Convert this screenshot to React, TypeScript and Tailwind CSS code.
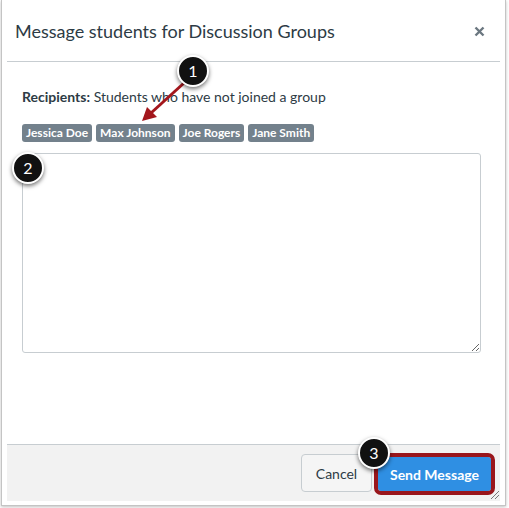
import React from "react";

const recipients = ["Jessica Doe", "Max Johnson", "Joe Rogers", "Jane Smith"];

function Marker({ n, className }: { n: number; className: string }) {
  return (
    <div
      className={`absolute w-[32px] h-[32px] rounded-full bg-[#111] border-2 border-white shadow-[0_2px_4px_rgba(0,0,0,0.55)] flex items-center justify-center text-white text-[16px] leading-none ${className}`}
    >
      {n}
    </div>
  );
}

export default function App() {
  return (
    <main className="min-h-screen bg-white font-['Lato','Liberation_Sans',sans-serif] relative">
      <div className="ml-[1px] w-[505px] h-[506px] border-x border-b border-[#c4c4c4] shadow-[0_1px_3px_rgba(0,0,0,0.25)] px-[5px] pb-[4px] flex flex-col bg-white">
        <header className="h-[62px] shrink-0 border-b border-[#c7cdd1] flex items-center justify-between pl-[8px] pr-[15px] pt-[1px]">
          <h1 className="text-[18px] text-[#2d3b45] font-normal">
            Message students for Discussion Groups
          </h1>
          <svg width="11" height="11" viewBox="0 0 11 11" className="text-[#6b7780]">
            <path d="M1.5 1.5 L9.5 9.5 M9.5 1.5 L1.5 9.5" stroke="currentColor" strokeWidth="2.4" />
          </svg>
        </header>

        <section className="flex-1 px-[15px] pt-[25px]">
          <p className="text-[14px] leading-[20px] text-[#2d3b45]">
            <span className="font-bold">Recipients:</span> Students who have not joined a group
          </p>
          <div className="flex gap-[4px] mt-[17px]">
            {recipients.map((r) => (
              <span
                key={r}
                className="h-[18px] px-[4px] rounded-[3px] bg-[#73818c] text-white text-[12px] font-bold leading-[18px]"
              >
                {r}
              </span>
            ))}
          </div>
          <textarea className="mt-[11px] w-[459px] h-[200px] block border border-[#c7cdd1] rounded-[3px] bg-white outline-none" />
        </section>

        <footer className="h-[57px] shrink-0 border-t border-[#c7cdd1] bg-[#f2f2f2] flex items-start justify-end gap-[6px] pt-[9px] pr-[9px]">
          <button className="h-[38px] w-[71px] rounded-[4px] border border-[#c7cdd1] bg-[#f5f5f5] text-[14px] text-[#2d3b45]">
            Cancel
          </button>
          <button className="h-[34px] mt-[3px] w-[113px] rounded-[3px] bg-[#2f8fe3] text-[14px] font-bold text-white outline-[4px] outline-solid outline-[#99161c]">
            Send Message
          </button>
        </footer>
      </div>

      <svg className="absolute left-0 top-0 pointer-events-none" width="509" height="508">
        <line x1="184" y1="83" x2="151" y2="113" stroke="#a3161c" strokeWidth="3" />
        <polygon points="142,121 147,107 157,117" fill="#a3161c" />
        <g stroke="#777" strokeWidth="1">
          <line x1="491" y1="499" x2="499" y2="491" />
          <line x1="495" y1="499" x2="499" y2="495" />
        </g>
      </svg>

      <Marker n={1} className="left-[177px] top-[55px]" />
      <Marker n={2} className="left-[12px] top-[152px]" />
      <Marker n={3} className="left-[358px] top-[437px]" />
    </main>
  );
}
